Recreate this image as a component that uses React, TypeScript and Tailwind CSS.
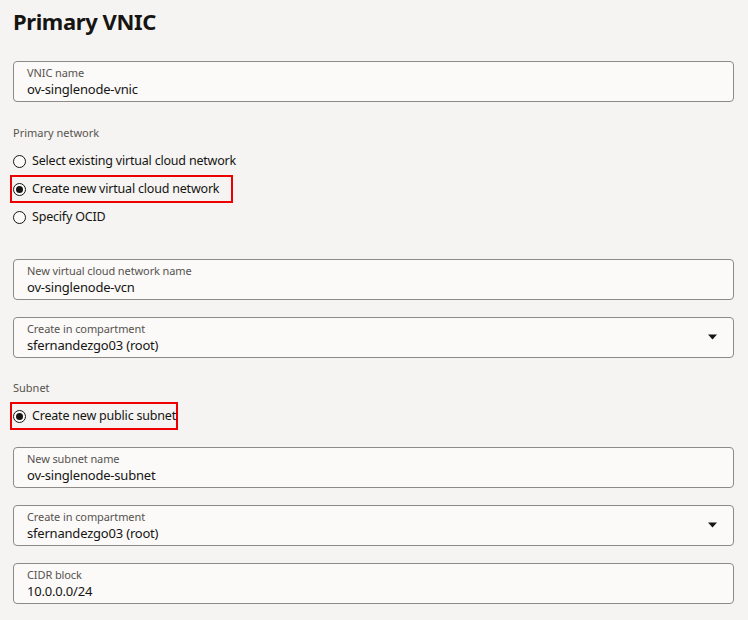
import React from "react";

const font = { fontFamily: '"Noto Sans", "Open Sans", sans-serif' };

const Field = ({ label, value, select }: { label: string; value: string; select?: boolean }) => (
  <div className="relative h-[41px] w-[721px] rounded-[4px] border border-[#8c8b89] bg-[#fbfaf9] px-[13px] pt-[3px]">
    <div className="text-[11px] leading-[15px] tracking-[-0.1px] text-[#57534e]">{label}</div>
    <div className="text-[13px] leading-[18px] tracking-[-0.2px] text-[#161513]">{value}</div>
    {select && (
      <svg className="absolute right-[16px] top-[16px]" width="9" height="6" viewBox="0 0 9 6">
        <path d="M0 0.5h9L4.5 5.5z" fill="#161513" />
      </svg>
    )}
  </div>
);

const Radio = ({ label, checked, box }: { label: string; checked?: boolean; box?: string }) => (
  <div className={`flex h-[28px] items-center gap-[6px] ${box ?? ""}`}>
    <span className="flex h-[13px] w-[13px] items-center justify-center rounded-full border border-[#161513] bg-[#fbfaf9]">
      {checked && <span className="h-[7px] w-[7px] rounded-full bg-[#161513]" />}
    </span>
    <span className="text-[12.5px] tracking-[-0.2px] text-[#161513]">{label}</span>
  </div>
);

export default function App() {
  return (
    <div className="h-[620px] w-[748px] overflow-hidden bg-[#f5f4f2] pl-[13px]" style={font}>
      <h1 className="pt-[6px] text-[22px] font-bold leading-[30px] tracking-[-0.4px] text-[#161513]">Primary VNIC</h1>
      <div className="mt-[25px]">
        <Field label="VNIC name" value="ov-singlenode-vnic" />
      </div>
      <div className="mt-[23px] text-[11px] leading-[15px] text-[#57534e]">Primary network</div>
      <div className="mt-[7px] flex flex-col">
        <Radio label="Select existing virtual cloud network" />
        <Radio
          label="Create new virtual cloud network"
          checked
          box="-ml-[3px] w-[223px] border-2 border-[#ee0000] pl-[1px]"
        />
        <Radio label="Specify OCID" />
      </div>
      <div className="mt-[28px] flex flex-col gap-[17px]">
        <Field label="New virtual cloud network name" value="ov-singlenode-vcn" />
        <Field label="Create in compartment" value="sfernandezgo03 (root)" select />
      </div>
      <div className="mt-[22px] text-[11px] leading-[15px] text-[#57534e]">Subnet</div>
      <div className="mt-[7px]">
        <Radio
          label="Create new public subnet"
          checked
          box="-ml-[3px] w-[168px] border-2 border-[#ee0000] pl-[1px]"
        />
      </div>
      <div className="mt-[17px] flex flex-col gap-[17px]">
        <Field label="New subnet name" value="ov-singlenode-subnet" />
        <Field label="Create in compartment" value="sfernandezgo03 (root)" select />
        <Field label="CIDR block" value="10.0.0.0/24" />
      </div>
    </div>
  );
}
